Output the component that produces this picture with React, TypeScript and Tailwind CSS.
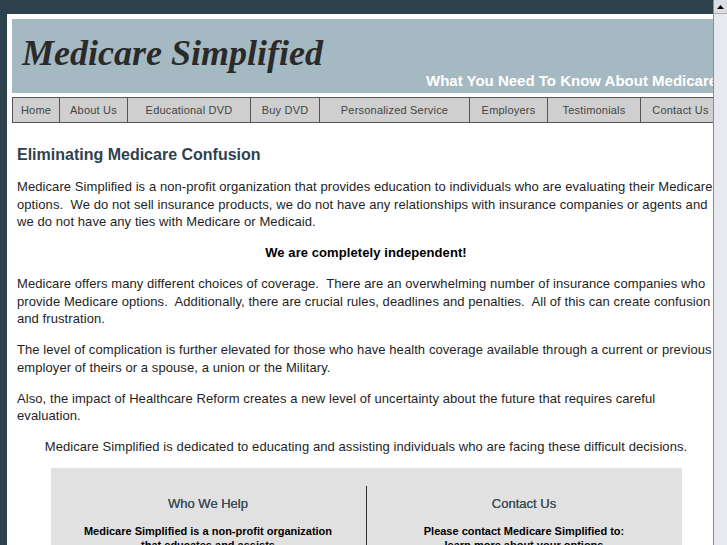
const navItems = [
  { label: "Home", w: "w-[47px]" },
  { label: "About Us", w: "w-[68px]" },
  { label: "Educational DVD", w: "w-[123px]" },
  { label: "Buy DVD", w: "w-[69px]" },
  { label: "Personalized Service", w: "w-[150px]" },
  { label: "Employers", w: "w-[78px]" },
  { label: "Testimonials", w: "w-[93px]" },
  { label: "Contact Us", w: "w-[80px]" },
];

export default function App() {
  return (
    <div className="flex h-[545px] w-[727px] overflow-hidden bg-[#2e424d] font-['Liberation_Sans',Arial,sans-serif]">
      <div className="flex-1 overflow-hidden pl-[7px] pt-[14px]">
        <div className="w-[724px] bg-white p-[5px]">
          {/* header */}
          <div className="h-[74px] bg-[#a5b9c2] pl-[10px] pt-[13px]">
            <div className="font-['Liberation_Serif',serif] text-[36px] font-bold italic leading-[42px] text-[#2a2a2a]">
              Medicare Simplified
            </div>
            <div className="ml-[404px] mt-[-2px] whitespace-nowrap text-[15px] font-bold leading-[17px] text-white">
              What You Need To Know About Medicare
            </div>
          </div>

          {/* nav */}
          <div className="mt-[4px] flex h-[26px] border border-[#555] bg-[#cfcfcf]">
            {navItems.map((n) => (
              <div
                key={n.label}
                className={`${n.w} flex shrink-0 items-center justify-center border-r border-[#555] text-[11px] tracking-[0.2px] text-[#444]`}
              >
                {n.label}
              </div>
            ))}
          </div>

          {/* content */}
          <div className="w-[708px] px-[5px] pt-[22px] text-[13px] leading-[17.5px] tracking-[0.08px] text-[#1e1e1e]">
            <h1 className="mb-[14px] text-[16px] font-bold leading-[19px] tracking-normal text-[#2e424d]">
              Eliminating Medicare Confusion
            </h1>
            <p className="mb-[13.5px]">
              Medicare Simplified is a non-profit organization that provides education to individuals who are evaluating their Medicare options.&nbsp; We do not sell insurance products, we do not have any relationships with insurance companies or agents and we do not have any ties with Medicare or Medicaid.
            </p>
            <p className="mb-[13.5px] text-center font-bold text-black">We are completely independent!</p>
            <p className="mb-[13.5px]">
              Medicare offers many different choices of coverage.&nbsp; There are an overwhelming number of insurance companies who provide Medicare options.&nbsp; Additionally, there are crucial rules, deadlines and penalties.&nbsp; All of this can create confusion and frustration.
            </p>
            <p className="mb-[13.5px]">
              The level of complication is further elevated for those who have health coverage available through a current or previous employer of theirs or a spouse, a union or the Military.
            </p>
            <p className="mb-[13.5px]">
              Also, the impact of Healthcare Reform creates a new level of uncertainty about the future that requires careful evaluation.
            </p>
            <p className="mb-[12px] text-center">
              Medicare Simplified is dedicated to educating and assisting individuals who are facing these difficult decisions.
            </p>

            <div className="mx-auto flex w-[631px] bg-[#e1e1e1] pt-[18px] pb-[20px] tracking-normal">
              <div className="flex-1 pt-[10px] text-center">
                <div className="text-[13px] leading-[16px] text-[#3b4d58] [text-shadow:0_0_0.3px_#3b4d58]">Who We Help</div>
                <div className="mt-[12px] text-[11px] font-bold leading-[14px] text-black">
                  Medicare Simplified is a non-profit organization
                  <br />
                  that educates and assists
                </div>
              </div>
              <div className="w-px bg-[#333]" />
              <div className="flex-1 pt-[10px] text-center">
                <div className="text-[13px] leading-[16px] text-[#3b4d58] [text-shadow:0_0_0.3px_#3b4d58]">Contact Us</div>
                <div className="mt-[12px] text-[11px] font-bold leading-[14px] text-black">
                  Please contact Medicare Simplified to:
                  <br />
                  learn more about your options
                </div>
              </div>
            </div>
          </div>
        </div>
      </div>

      {/* scrollbar */}
      <div className="flex w-[14px] shrink-0 flex-col border-l border-[#8c8c8c] bg-[#e8e9ee]">
        <div className="flex h-[14px] items-center justify-center border-b border-[#b0b0b0] bg-[#dcdde2]">
          <svg width="7" height="4" viewBox="0 0 7 4">
            <polygon points="3.5,0 7,4 0,4" fill="#000" />
          </svg>
        </div>
        <div className="flex-1" />
      </div>
    </div>
  );
}
